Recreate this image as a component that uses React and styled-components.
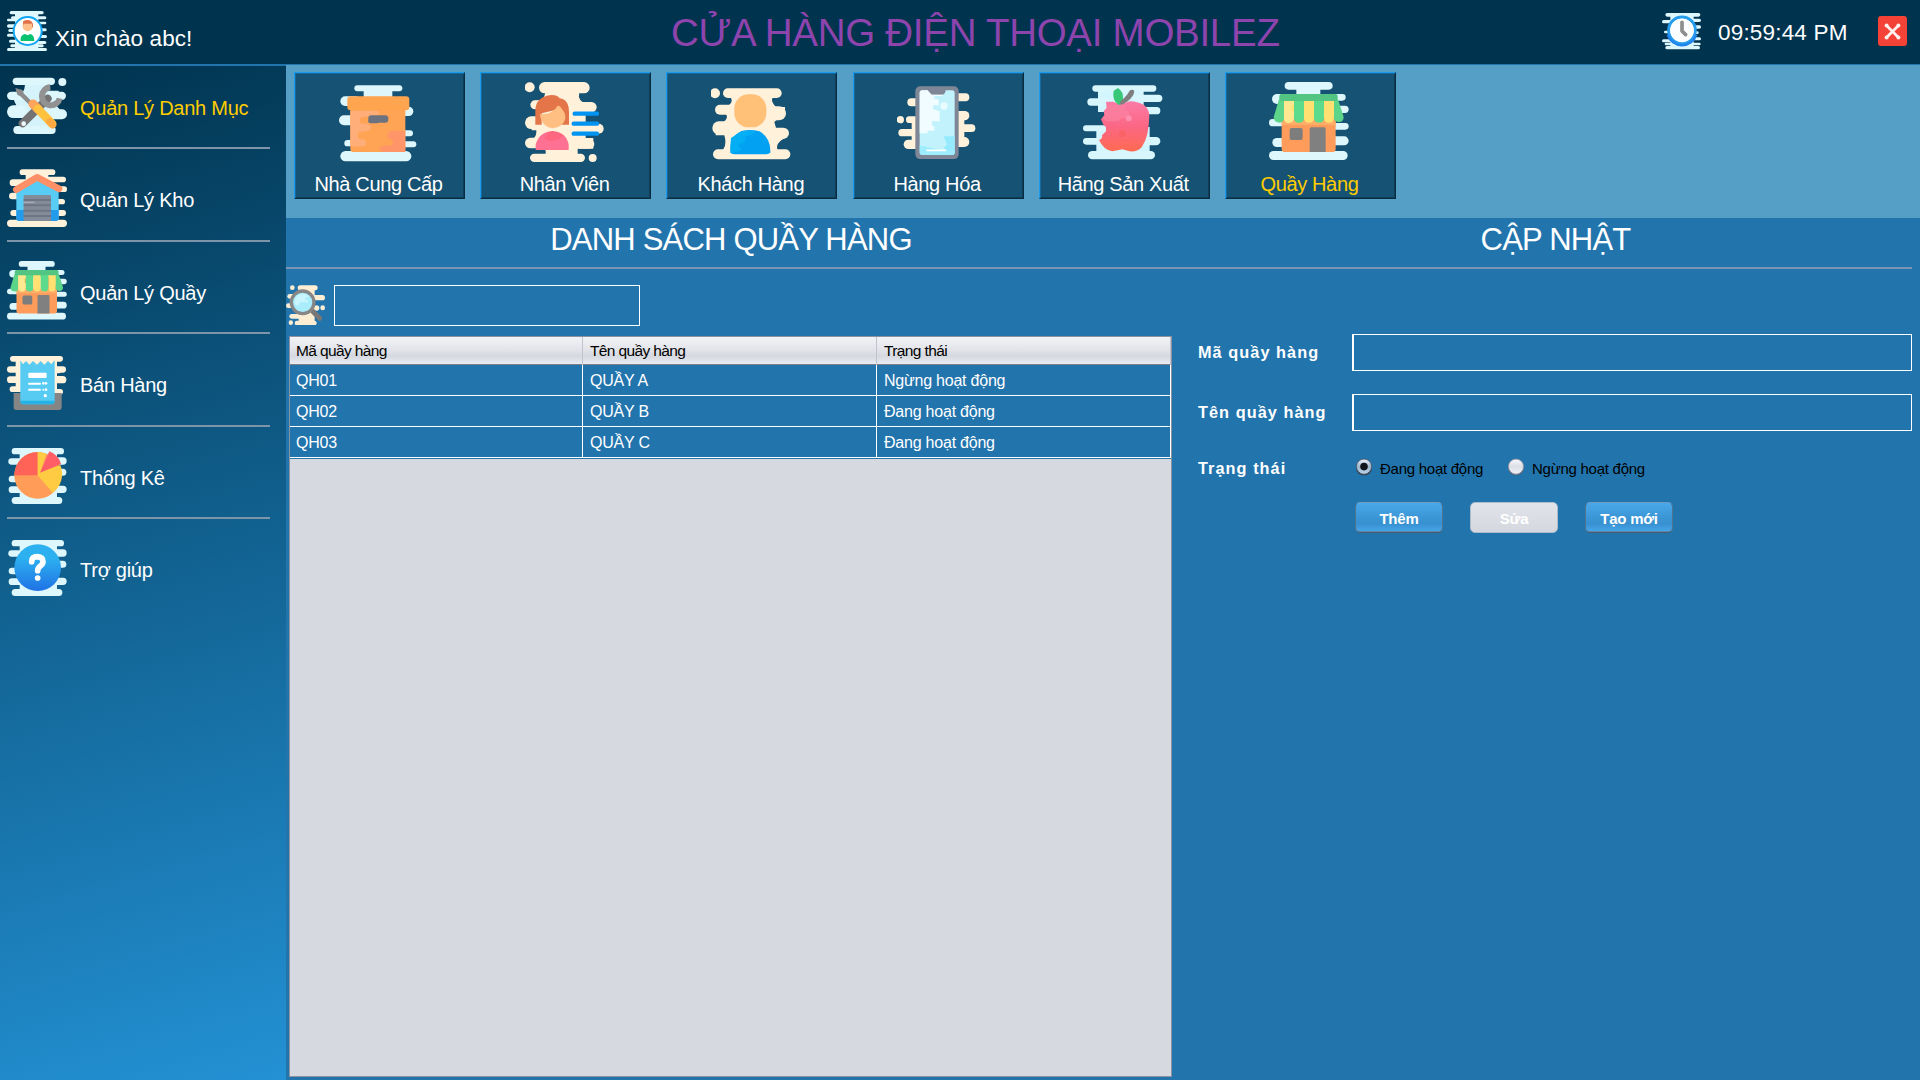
import React, { useState } from "react";
import styled, { createGlobalStyle, css } from "styled-components";

const GlobalStyle = createGlobalStyle`
  * { box-sizing: border-box; }
  body { margin: 0; background: #2274ad; font-family: "Liberation Sans", Arial, sans-serif; overflow: hidden; }
  button, input { font-family: inherit; }
`;

/* ---------- layout ---------- */
const Screen = styled.div`
  width: 1920px;
  height: 1080px;
  display: flex;
  flex-direction: column;
`;
const Header = styled.header`
  height: 65px;
  flex: none;
  display: flex;
  background: #00334e;
  border-bottom: 1px solid #2274ad;
`;
const Greeting = styled.div`
  width: 671px;
  padding: 11px 0 0 7px;
  display: flex;
  gap: 8px;
  color: #fff;
  font-size: 22.5px;
  letter-spacing: 0.08px;
  line-height: 55px;
  span { white-space: nowrap; }
`;
const StoreTitle = styled.h1`
  margin: 0;
  width: 991px;
  font-weight: 400;
  font-size: 38.5px;
  line-height: 66px;
  letter-spacing: -0.28px;
  color: #8e44ad;
  white-space: nowrap;
`;
const Clock = styled.div`
  width: 216px;
  display: flex;
  gap: 16px;
  padding-top: 12px;
  color: #fff;
  font-size: 22.5px;
  letter-spacing: 0.18px;
  line-height: 41px;
`;
const CloseButton = styled.button`
  width: 29px;
  height: 30px;
  margin-top: 16px;
  padding: 0;
  border: 0;
  border-radius: 3px;
  background: #f44336;
  display: grid;
  place-items: center;
`;
const Body = styled.div`
  flex: 1;
  display: flex;
  min-height: 0;
`;
const Sidebar = styled.nav`
  width: 286px;
  flex: none;
  border-top: 1px solid #2274ad;
  background: linear-gradient(164deg, #00334e 0%, #2391d4 100%);
`;
const NavItem = styled.a`
  display: flex;
  width: 263px;
  margin-left: 7px;
  padding-top: 19px;
  height: ${(p) => p.$height}px;
  border-bottom: 2px solid ${(p) => (p.$last ? "transparent" : "#7d94a9")};
  color: ${(p) => (p.$active ? "#ffcc00" : "#fff")};
  font-size: 20px;
  letter-spacing: -0.25px;
  &:first-child { padding-top: 10px; }
  span { margin-left: 13px; line-height: 65px; white-space: nowrap; }
`;
const Content = styled.main`
  flex: 1;
  display: flex;
  flex-direction: column;
  background: #2274ad;
`;
const TabStrip = styled.div`
  height: 153px;
  flex: none;
  background: #559fc6;
  padding: 7px 0 0 8px;
  display: flex;
  gap: 15.2px;
`;
const Tab = styled.button`
  width: 171px;
  height: 127px;
  padding: 9px 2px 0 0;
  background: #155273;
  border: 1px solid;
  border-color: #1c9bee #0a2c40 #0a2c40 #1c9bee;
  box-shadow: inset 1px 1px #17699b, inset -1px -1px #0e3d57;
  color: ${(p) => (p.$active ? "#ffcc00" : "#fff")};
  font-size: 20px;
  letter-spacing: -0.35px;
  display: flex;
  flex-direction: column;
  align-items: center;
  svg { flex: none; }
  span { line-height: 24px; margin-top: 10px; white-space: nowrap; }
`;
const Headings = styled.div`
  height: 51px;
  flex: none;
  margin-right: 8px;
  display: flex;
  border-bottom: 2px solid #7d94b4;
`;
const Heading = styled.h2`
  margin: 0;
  width: ${(p) => p.$width}px;
  padding-left: ${(p) => p.$inset || 0}px;
  text-align: center;
  font-weight: 400;
  font-size: 31px;
  letter-spacing: -0.8px;
  line-height: 43px;
  color: #fff;
`;
const Columns = styled.div`
  flex: 1;
  display: flex;
`;
const ListColumn = styled.section`
  width: 890px;
  display: flex;
  flex-direction: column;
  padding: 16px 4px 3px 0;
`;
const SearchBar = styled.div`
  display: flex;
  gap: 8px;
  height: 41px;
`;
const boxInput = css`
  background: transparent;
  border: 1px solid #fff;
  border-radius: 0;
  outline: 0;
  color: #fff;
  font-size: 16px;
  padding: 0 6px;
`;
const SearchInput = styled.input`
  ${boxInput}
  width: 306px;
`;
const TableFrame = styled.div`
  flex: 1;
  margin: 10px 0 0 3px;
  background: #d6d9e0;
  border: 1px solid #8c92a0;
`;
const TableHead = styled.div`
  display: grid;
  grid-template-columns: 293px 294px 1fr;
  height: 28px;
  border-bottom: 1px solid #7c7f88;
  background: linear-gradient(#f2f3f7 0%, #e3e5ea 45%, #d5d8df 70%, #e9ecf2 100%);
`;
const HeadCell = styled.div`
  padding-left: 6px;
  font-size: 15.5px;
  letter-spacing: -0.62px;
  line-height: 28px;
  color: #000;
  border-right: 1px solid #c0c3cb;
  & + & { padding-left: 7px; }
`;
const Row = styled.div`
  display: grid;
  grid-template-columns: 293px 294px 1fr;
  height: 31px;
  background: #2274ad;
  border-bottom: 1px solid #fff;
`;
const Cell = styled.div`
  padding-left: 6px;
  font-size: 16px;
  letter-spacing: -0.22px;
  line-height: 31px;
  color: #fff;
  border-right: 1px solid #fff;
  & + & { padding-left: 7px; }
`;
const TableEnd = styled.div`
  height: 1px;
  background: #2274ad;
`;
const FormColumn = styled.section`
  flex: 1;
  padding: 65px 8px 0 22px;
`;
const Field = styled.label`
  display: flex;
  align-items: center;
  height: 37px;
  margin-bottom: 23px;
`;
const FieldLabel = styled.span`
  width: 154px;
  flex: none;
  font-weight: 700;
  font-size: 16.3px;
  letter-spacing: 1.05px;
  color: #fff;
`;
const FieldInput = styled.input`
  ${boxInput}
  width: 560px;
  height: 37px;
  border-left-width: 2px;
`;
const StatusRow = styled.div`
  display: flex;
  align-items: center;
  height: 22px;
  margin-top: 26px;
`;
const RadioOption = styled.label`
  display: flex;
  align-items: center;
  gap: 7px;
  width: ${(p) => p.$width}px;
  padding-left: 4px;
  color: #000;
  font-size: 15px;
  letter-spacing: -0.26px;
  white-space: nowrap;
  svg { flex: none; margin-top: -3px; }
`;
const Actions = styled.div`
  display: flex;
  gap: 27px;
  margin: 23px 0 0 157px;
`;
const Action = styled.button`
  width: 88px;
  height: 31px;
  padding: 2px 0 0;
  border: 1px solid;
  border-color: #6c9cc2 #4f7391 #4f5b69;
  border-radius: 5px;
  background: linear-gradient(#49a8ea 0%, #3a94d4 55%, #3890d0 72%, #47a9ee 100%);
  box-shadow: inset 0 -1px #5a87ab;
  color: #fff;
  font-size: 15px;
  letter-spacing: -0.2px;
  font-weight: 700;
  &:disabled {
    border-color: #aebccb;
    background: linear-gradient(#e1e4e9, #d4d7de);
    box-shadow: none;
  }
`;

/* ---------- icons ---------- */
const Bars = ({ fill, items }) => (
  <g fill={fill}>
    {items.map(([x, y, w, h], i) => (
      <rect key={i} x={x} y={y} width={w} height={h} rx={Math.min(h, w) / 2} />
    ))}
  </g>
);
const Icon = ({ size, box, children }) => (
  <svg width={size} height={size} viewBox={`0 0 ${box} ${box}`}>{children}</svg>
);
const ICE = "#def7fd";
const CREAM = "#fff1da";

const UserBadge = () => (
  <Icon size={40} box={120}>
    <path d="M24 8H94V112H24Z" fill={ICE} />
    <Bars fill={ICE} items={[[8, 0, 102, 10], [12, 16, 106, 9], [0, 23, 50, 8], [80, 32, 38, 8], [0, 40, 50, 10], [85, 52, 34, 9], [4, 54, 40, 9], [0, 68, 50, 9], [84, 72, 36, 9], [6, 86, 60, 9], [80, 90, 38, 9], [0, 111, 120, 9], [10, 100, 100, 9]]} />
    <circle cx="62" cy="60" r="42" fill="#fff" stroke="#12a5f3" strokeWidth="6" />
    <circle cx="62" cy="46" r="15" fill="#ffc08a" />
    <path d="M48 44V32Q50 26 64 27Q80 30 78 47L75 51V38H50Z" fill="#e0734b" />
    <path d="M41 90V82Q44 70 54 69L62 73L70 69Q82 72 82 90Z" fill="#08c271" />
  </Icon>
);
const ClockIcon = () => (
  <Icon size={40} box={120}>
    <path d="M25 8H95V108H25Z" fill={ICE} />
    <Bars fill={ICE} items={[[10, 3, 105, 11], [0, 24, 50, 10], [75, 20, 42, 10], [80, 40, 37, 10], [6, 56, 40, 8], [85, 58, 25, 8], [0, 82, 60, 9], [80, 76, 37, 9], [8, 92, 108, 8], [10, 102, 104, 10]]} />
    <circle cx="60" cy="55" r="40" fill="#fff" stroke="#269ced" strokeWidth="9" />
    <path d="M17 68a45 45 0 0 0 86 0" fill="none" stroke="#2184ec" strokeWidth="7" />
    <circle cx="60" cy="55" r="35" fill="#fbfdff" />
    <path d="M60 31V57L71 68" fill="none" stroke="#8d8d8d" strokeWidth="11" strokeLinecap="round" strokeLinejoin="round" />
  </Icon>
);
const CloseIcon = () => (
  <svg width="19" height="19" viewBox="0 0 19 19">
    <path d="M3.5 3.5L15.5 15.5M15.5 3.5L3.5 15.5" stroke="#fff0ee" strokeWidth="2.8" strokeLinecap="round" />
    <g fill="#fff0ee">
      <circle cx="3.6" cy="3.6" r="2" /><circle cx="15.4" cy="3.6" r="2" />
      <circle cx="3.6" cy="15.4" r="2" /><circle cx="15.4" cy="15.4" r="2" />
    </g>
  </svg>
);
const SearchIcon = () => (
  <Icon size={40} box={120}>
    <g transform="translate(0 1)">
      <Bars fill="#fdeed3" items={[[12, 0, 14, 14], [35, 0, 60, 15], [4, 26, 40, 14], [60, 29, 57, 16], [0, 54, 40, 14], [84, 60, 16, 16], [103, 60, 14, 15], [10, 86, 70, 14], [8, 105, 13, 14], [26, 106, 66, 14]]} />
      <path d="M38 12H86V114H38Z" fill="#fdeed3" />
      <path d="M80 78L101 99" stroke="#777" strokeWidth="15" strokeLinecap="round" />
      <circle cx="50" cy="51" r="34" fill="#a9edfd" stroke="#868686" strokeWidth="10" />
      <path d="M26 52Q26 28 50 26Q64 27 69 36H58V44H66V51H40V60H30Z" fill="#c9f5fe" />
    </g>
  </Icon>
);
const ToolsIcon = () => (
  <Icon size={60} box={180}>
    <path d="M54 20H122Q112 32 122 44H155V75H140Q150 95 165 105V126H130L134 158H46Q60 145 48 126H20V92H30Q22 78 20 70V50H45Q54 44 54 20Z" fill="#d5f3fb" />
    <Bars fill={ICE} items={[[17, 5, 127, 22], [0, 47, 60, 25], [120, 47, 57, 25], [0, 88, 60, 38], [110, 100, 70, 30], [19, 150, 127, 24]]} />
    <circle cx="166" cy="18" r="12" fill={ICE} />
    <path d="M47 142L122 68" stroke="#737373" strokeWidth="24" strokeLinecap="round" />
    <circle cx="50" cy="143" r="7" fill="#eefaff" />
    <path d="M130 34A27 27 0 1 0 158 67" fill="none" stroke="#929292" strokeWidth="18" strokeLinecap="butt" />
    <path d="M25 36L47 42L50 52L84 86L74 94L40 61L31 56Z" fill="#8b8b8b" />
    <path d="M78 84L96 102" stroke="#ffa35d" strokeWidth="27" strokeLinecap="round" />
    <path d="M92 98L136 144" stroke="#ffc23e" strokeWidth="25" strokeLinecap="round" />
    <path d="M128 137L137 147" stroke="#ffa943" strokeWidth="21" strokeLinecap="round" />
  </Icon>
);
const WarehouseIcon = () => (
  <Icon size={60} box={180}>
    <path d="M56 12H124V165H56Z" fill={CREAM} />
    <Bars fill={CREAM} items={[[38, 4, 107, 17], [8, 34, 80, 20], [100, 26, 77, 17], [130, 55, 50, 17], [6, 74, 50, 20], [130, 93, 44, 16], [10, 126, 50, 18], [130, 126, 47, 18], [0, 155, 180, 22]]} />
    <path d="M28 66L90 26L155 66V150Q155 159 146 159H37Q28 159 28 150Z" fill="#58ccf4" />
    <path d="M28 126H155V150Q155 159 146 159H37Q28 159 28 150Z" fill="#239bea" />
    <rect x="50" y="81" width="82" height="78" rx="3" fill="#838a98" />
    <path d="M50 96H132M50 112H132M50 128H132M50 144H132" stroke="#6e7583" strokeWidth="6" />
    <path d="M50 103H82" stroke="#a7adb7" strokeWidth="4" />
    <path d="M28 65L90 28L156 62" fill="none" stroke="#ff8f66" strokeWidth="20" strokeLinecap="round" strokeLinejoin="round" />
  </Icon>
);
const StoreArt = () => (
  <>
    <path d="M82 10H154V220H82Z" fill={ICE} />
    <Bars fill={ICE} items={[[47, 0, 144, 23], [9, 36, 120, 30], [150, 36, 80, 20], [180, 71, 59, 22], [0, 111, 70, 22], [180, 123, 59, 20], [10, 168, 70, 27], [180, 163, 59, 27], [0, 207, 236, 27]]} />
    <path d="M38 110H200V200Q200 210 190 210H48Q38 210 38 200Z" fill="#ff9c5b" />
    <rect x="38" y="116" width="162" height="13" fill="#ffad67" />
    <rect x="62" y="138" width="39" height="36" rx="6" fill="#7d7d7d" />
    <path d="M122 210V141Q122 136 127 136H165Q170 136 170 141V210Z" fill="#808080" />
    <path d="M30 52H207L224 105Q224 120 210 120Q195 120 194 105L190 64H45L46 105Q46 122 31 122Q14 121 14 106Z" fill="#5cd489" />
    {[45, 75, 105, 135, 165].map((x, i) => (
      <path key={x} d={`M${x} 50H${x + 30}V107Q${x + 30} 122 ${x + 15} 122Q${x} 122 ${x} 107Z`} fill={i % 2 ? "#5cdb8c" : "#ffe070"} />
    ))}
    <path d="M45 58H75V70H68V88H75V108Q73 122 60 122Q45 122 45 107Z" fill="#ffe990" />
    <rect x="31" y="36" width="175" height="21" rx="6" fill="#52c583" />
  </>
);
const StoreIcon = ({ size }) => <Icon size={size} box={240}><StoreArt /></Icon>;
const ReceiptIcon = () => (
  <Icon size={60} box={180}>
    <path d="M26 15H150V115H26Z" fill={CREAM} />
    <Bars fill={CREAM} items={[[9, 9, 159, 17], [0, 40, 60, 19], [140, 40, 37, 19], [0, 70, 50, 20], [140, 69, 38, 22], [8, 100, 50, 17], [130, 108, 38, 17], [130, 52, 30, 9]]} />
    <path d="M20 120H164V163Q164 171 156 171H28Q20 171 20 163Z" fill="#858585" />
    <path d="M40 22L48 34L57 24L67 35L78 24L90 35L101 24L112 35L123 24L133 34L143 22V145Q143 154 134 154H49Q40 154 40 145Z" fill="#58cbf3" />
    <path d="M40 143H143V145Q143 154 134 154H49Q40 154 40 145Z" fill="#24b2e4" />
    <rect x="64" y="59" width="55" height="16" rx="3" fill="#fff" />
    <path d="M66 92H99M66 110H99" stroke="#fff" strokeWidth="6" strokeLinecap="round" />
    <g fill="#fff"><circle cx="109" cy="91" r="4" /><circle cx="117" cy="91" r="4" /><circle cx="109" cy="110" r="3" /><circle cx="117" cy="110" r="4" /><circle cx="115" cy="128" r="5" /></g>
  </Icon>
);
const roundBack = [[14, 6, 157, 19], [4, 37, 60, 19], [120, 34, 59, 22], [130, 68, 48, 21], [5, 89, 40, 20], [5, 121, 60, 20], [120, 119, 59, 22], [14, 153, 152, 21]];
const PieIcon = () => (
  <Icon size={60} box={180}>
    <path d="M38 12H150V165H38Z" fill={ICE} />
    <Bars fill={ICE} items={roundBack} />
    <circle cx="92" cy="88" r="70" fill="#ff9d58" />
    <path d="M92 88V18A70 70 0 0 0 22 88Z" fill="#ff6257" />
    <path d="M92 88V18A70 70 0 0 1 118 23L100 78L160 57A70 70 0 0 1 137 140Z" fill="#ffcb43" />
    <path d="M99 80L127 16Q154 26 162 54Z" fill="#ff5e66" />
  </Icon>
);
const HelpIcon = () => (
  <Icon size={60} box={180}>
    <defs>
      <linearGradient id="help" x1="0" y1="0" x2="0" y2="1">
        <stop offset="0.3" stopColor="#2cb0f0" /><stop offset="1" stopColor="#2072e5" />
      </linearGradient>
    </defs>
    <path d="M38 12H150V165H38Z" fill={ICE} />
    <Bars fill={ICE} items={roundBack} />
    <circle cx="92" cy="89" r="70" fill="url(#help)" />
    <path d="M74 71Q74 56 91 56Q108 57 108 71Q108 78 100 84Q92 90 92 98" fill="none" stroke="#fff" strokeWidth="17" strokeLinecap="round" />
    <circle cx="92" cy="120" r="8.5" fill="#fff" />
  </Icon>
);
const BoxIcon = () => (
  <Icon size={80} box={240}>
    <path d="M74 15H160V220H74Z" fill={ICE} />
    <Bars fill={ICE} items={[[46, 10, 144, 18], [4, 43, 60, 29], [160, 74, 63, 28], [0, 100, 60, 30], [170, 145, 52, 18], [16, 174, 50, 19], [170, 178, 62, 18], [4, 207, 213, 31]]} />
    <path d="M34 80H199V200Q199 210 189 210H44Q34 210 34 200Z" fill="#ffa354" />
    <path d="M34 86H110Q125 86 118 97Q112 104 70 104Q55 112 68 125H85Q100 130 94 142Q88 148 60 150Q52 160 62 172H74Q85 178 80 190Q70 195 34 193Z" fill="#ffae79" />
    <path d="M155 147H199V210H135Q120 208 122 198Q126 190 160 190Q170 176 150 170Q138 158 155 147Z" fill="#ff9568" />
    <rect x="25" y="43" width="186" height="42" rx="10" fill="#ffa550" />
    <rect x="88" y="100" width="60" height="22" rx="9" fill="#6c727f" />
    <rect x="88" y="112" width="32" height="12" rx="6" fill="#6c727f" />
  </Icon>
);
const EmployeeIcon = () => (
  <Icon size={80} box={240}>
    <path d="M60 20H168Q152 48 175 62H205V90H182V168H205V200H158V222H58Q68 212 56 196H20V172Q36 166 34 145H20V110H34V80H30V56Q64 58 60 20Z" fill={CREAM} />
    <Bars fill={CREAM} items={[[42, 0, 152, 34], [16, 55, 70, 27], [150, 60, 65, 32], [0, 103, 60, 38], [150, 125, 86, 30], [0, 167, 60, 32], [150, 172, 58, 28], [15, 215, 165, 25]]} />
    <circle cx="14" cy="16" r="15" fill={CREAM} /><circle cx="203" cy="228" r="12" fill={CREAM} />
    <path d="M31 128V86Q31 44 80 39Q97 39 104 49Q132 52 132 92V128H107V80L50 94V128Z" fill="#e37549" />
    <path d="M44 97Q67 97 80 89Q93 80 98 71Q105 70 113 84Q122 94 121 109Q116 137 82 139Q50 135 44 97Z" fill="#ffbf83" />
    <path d="M32 204V188Q42 150 82 147Q124 150 131 188V204Z" fill="#ff7192" />
    <path d="M58 169Q66 150 82 148Q100 150 116 160Q112 170 90 174Q72 182 58 169Z" fill="#ff6680" />
    <path d="M149 95H216M146 125H216M146 155H216" stroke="#0094f2" strokeWidth="13" strokeLinecap="round" />
  </Icon>
);
const CustomerIcon = () => (
  <Icon size={80} box={240}>
    <path d="M54 40H192Q172 52 195 75H222V100Q198 112 190 120L200 155V165H230Q190 180 200 204L220 215H20Q52 200 40 160H14V125H30Q56 110 44 95H18V72H50Q72 58 54 40Z" fill={CREAM} />
    <Bars fill={CREAM} items={[[36, 19, 176, 29], [12, 68, 80, 30], [140, 73, 85, 42], [4, 118, 80, 40], [140, 137, 94, 33], [6, 202, 232, 30]]} />
    <circle cx="12" cy="34" r="15" fill={CREAM} />
    <rect x="70" y="37" width="96" height="99" rx="43" fill="#ffc078" />
    <path d="M58 211Q55 163 92 147Q118 141 145 148Q180 167 178 211Q175 217 166 217H70Q60 217 58 211Z" fill="#03a1f2" />
    <path d="M60 168L92 147H132Q130 160 100 164Q112 180 80 188L92 204L62 214Q56 200 60 168Z" fill="#04aef5" />
  </Icon>
);
const PhoneIcon = () => (
  <Icon size={80} box={240}>
    <Bars fill={CREAM} items={[[31, 49, 60, 24], [150, 34, 67, 24], [27, 103, 60, 20], [150, 87, 67, 28], [4, 141, 70, 22], [160, 127, 75, 23], [20, 173, 60, 28], [150, 165, 67, 30]]} />
    <path d="M44 110H70V190H44ZM170 95H202V180H170Z" fill={CREAM} />
    <circle cx="10" cy="113" r="11" fill={CREAM} />
    <rect x="55" y="13" width="130" height="218" rx="14" fill="#7f8696" />
    <path d="M76 25H92Q96 38 104 38H136Q144 38 146 25H165Q173 25 173 33V211Q173 219 165 219H76Q68 219 68 211V33Q68 25 76 25Z" fill="#c2f3fd" />
    <path d="M68 33Q68 25 76 25H92L104 38H136V42H112V52H125V70H108V80L122 86H128V118H105V130L112 134V146H92V154H68Z" fill="#f0fcff" />
    <path d="M140 163H173V211Q173 219 165 219H135Q150 210 140 197L150 188Z" fill="#95ebfd" />
    <path d="M68 190V211Q68 219 76 219H165Q173 219 173 211V205H135Z" fill="#9eedfd" />
    <path d="M90 205H146" stroke="#fff" strokeWidth="5" strokeLinecap="round" />
    <circle cx="141" cy="72" r="11" fill="#e9fbff" />
  </Icon>
);
const AppleIcon = () => (
  <Icon size={80} box={240}>
    <path d="M45 20H182V90H45ZM40 135H200V222H40Z" fill="#d3f5fd" />
    <Bars fill="#d8f7fd" items={[[28, 10, 192, 19], [13, 49, 120, 22], [150, 38, 88, 22], [170, 75, 62, 22], [0, 130, 80, 18], [0, 168, 80, 20], [160, 165, 72, 25], [15, 207, 201, 25]]} />
    <defs>
      <linearGradient id="apple" x1="0" y1="0" x2="0" y2="1">
        <stop offset="0" stopColor="#fb7ba6" /><stop offset="0.5" stopColor="#fb6784" /><stop offset="1" stopColor="#ff6a52" />
      </linearGradient>
    </defs>
    <path d="M69 59H92L110 68L140 58Q196 60 199 100Q198 165 177 194Q165 210 140 208L118 202L88 208Q62 204 48 174Q60 170 57 160L69 148V136L60 126L54 112L64 100L62 88L71 78Z" fill="url(#apple)" />
    <path d="M72 70H130Q120 82 140 90L135 105Q100 112 110 118H70L58 110L66 98L63 88L71 80Z" fill="#fb82a0" opacity="0.7" />
    <path d="M107 69Q86 55 92 26L105 18Q122 30 120 50Q118 65 107 69Z" fill="#37c777" />
    <path d="M109 69Q122 68 134 58Q153 42 154 27Q149 21 141 25Q132 42 121 50Q110 57 109 69Z" fill="#7e7e7e" />
    <circle cx="137" cy="109" r="9" fill="#ff8fae" /><circle cx="118" cy="155" r="10" fill="#fb6268" />
  </Icon>
);
const RadioMark = ({ on }) => (
  <svg width="17" height="18" viewBox="0 0 17 18">
    <defs>
      <linearGradient id={on ? "ron" : "roff"} x1="0" y1="0" x2="0" y2="1">
        <stop offset="0" stopColor={on ? "#f3f6fa" : "#fafafd"} />
        <stop offset="0.5" stopColor={on ? "#9cb6cf" : "#dcdfe7"} />
        <stop offset="1" stopColor={on ? "#bfd6ea" : "#f1f3f8"} />
      </linearGradient>
    </defs>
    <circle cx="8" cy="9.6" r="8" fill={on ? "#2c3b4d" : "#4c6784"} />
    <circle cx="8" cy="8.6" r="7.6" fill={`url(#${on ? "ron" : "roff"})`} stroke={on ? "#4c5a6e" : "#868b98"} strokeWidth="0.9" />
    {on && <circle cx="8" cy="8.6" r="3.8" fill="#10151b" />}
  </svg>
);

/* ---------- data ---------- */
const NAV = [
  { label: "Quản Lý Danh Mục", icon: <ToolsIcon />, height: 83 },
  { label: "Quản Lý Kho", icon: <WarehouseIcon />, height: 93 },
  { label: "Quản Lý Quầy", icon: <StoreIcon size={60} />, height: 92 },
  { label: "Bán Hàng", icon: <ReceiptIcon />, height: 93 },
  { label: "Thống Kê", icon: <PieIcon />, height: 92 },
  { label: "Trợ giúp", icon: <HelpIcon />, height: 92 },
];
const TABS = [
  { label: "Nhà Cung Cấp", icon: <BoxIcon /> },
  { label: "Nhân Viên", icon: <EmployeeIcon /> },
  { label: "Khách Hàng", icon: <CustomerIcon /> },
  { label: "Hàng Hóa", icon: <PhoneIcon /> },
  { label: "Hãng Sản Xuất", icon: <AppleIcon /> },
  { label: "Quầy Hàng", icon: <StoreIcon size={80} /> },
];
const ROWS = [
  ["QH01", "QUẦY A", "Ngừng hoạt động"],
  ["QH02", "QUẦY B", "Đang hoạt động"],
  ["QH03", "QUẦY C", "Đang hoạt động"],
];

export default function App() {
  const [active, setActive] = useState(true);
  return (
    <Screen>
      <GlobalStyle />
      <Header>
        <Greeting><UserBadge /><span>Xin chào abc!</span></Greeting>
        <StoreTitle>CỬA HÀNG ĐIỆN THOẠI MOBILEZ</StoreTitle>
        <Clock><ClockIcon /><span>09:59:44 PM</span></Clock>
        <CloseButton><CloseIcon /></CloseButton>
      </Header>
      <Body>
        <Sidebar>
          {NAV.map((n, i) => (
            <NavItem key={n.label} $height={n.height} $active={i === 0} $last={i === NAV.length - 1}>
              {n.icon}<span>{n.label}</span>
            </NavItem>
          ))}
        </Sidebar>
        <Content>
          <TabStrip>
            {TABS.map((t, i) => (
              <Tab key={t.label} $active={i === 5}>{t.icon}<span>{t.label}</span></Tab>
            ))}
          </TabStrip>
          <Headings>
            <Heading $width={890}>DANH SÁCH QUẦY HÀNG</Heading>
            <Heading $width={736} $inset={23}>CẬP NHẬT</Heading>
          </Headings>
          <Columns>
            <ListColumn>
              <SearchBar><SearchIcon /><SearchInput /></SearchBar>
              <TableFrame>
                <TableHead>
                  <HeadCell>Mã quầy hàng</HeadCell>
                  <HeadCell>Tên quầy hàng</HeadCell>
                  <HeadCell>Trạng thái</HeadCell>
                </TableHead>
                {ROWS.map((r) => (
                  <Row key={r[0]}>{r.map((c) => <Cell key={c}>{c}</Cell>)}</Row>
                ))}
                <TableEnd />
              </TableFrame>
            </ListColumn>
            <FormColumn>
              <Field><FieldLabel>Mã quầy hàng</FieldLabel><FieldInput /></Field>
              <Field><FieldLabel>Tên quầy hàng</FieldLabel><FieldInput /></Field>
              <StatusRow>
                <FieldLabel>Trạng thái</FieldLabel>
                <RadioOption $width={152} onClick={() => setActive(true)}><RadioMark on={active} />Đang hoạt động</RadioOption>
                <RadioOption $width={152} onClick={() => setActive(false)}><RadioMark on={!active} />Ngừng hoạt động</RadioOption>
              </StatusRow>
              <Actions>
                <Action>Thêm</Action>
                <Action disabled>Sửa</Action>
                <Action>Tạo mới</Action>
              </Actions>
            </FormColumn>
          </Columns>
        </Content>
      </Body>
    </Screen>
  );
}
